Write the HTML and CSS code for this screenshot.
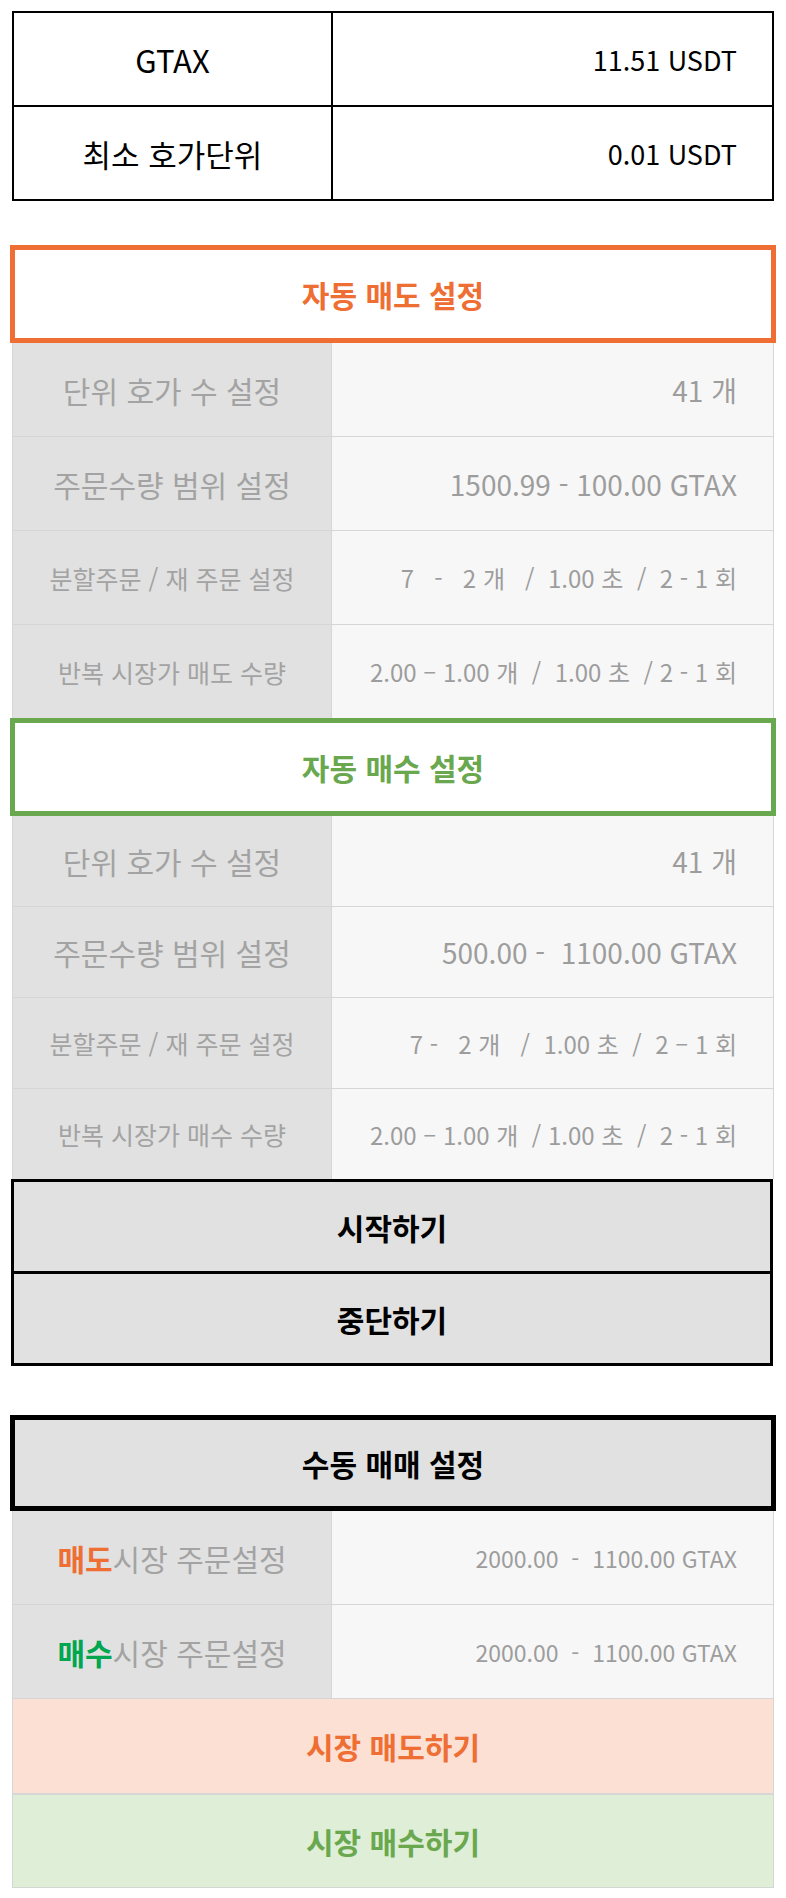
FILE: index.html
```html
<!DOCTYPE html>
<html lang="ko">

<head>
    <meta charset="UTF-8">
    <meta name="viewport" content="width=device-width, initial-scale=1.0">
    <title>GTAX 자동 매매</title>
    <link rel="stylesheet" href="styles.css">
</head>

<body>
    <div class="page">
        <div class="info">
            <div class="info-row">
                <div class="info-name">GTAX</div>
                <div class="info-value">11.51 USDT</div>
            </div>
            <div class="info-row">
                <div class="info-name">최소 호가단위</div>
                <div class="info-value">0.01 USDT</div>
            </div>
        </div>

        <!-- 자동 매도 -->
        <div class="section-title sell">자동 매도 설정</div>
        <div class="settings">
            <div class="setting">
                <div class="setting-name">단위 호가 수 설정</div>
                <div class="setting-value">41 개</div>
            </div>
            <div class="setting">
                <div class="setting-name">주문수량 범위 설정</div>
                <div class="setting-value">1500.99 - 100.00 GTAX</div>
            </div>
            <div class="setting small">
                <div class="setting-name">분할주문 / 재 주문 설정</div>
                <div class="setting-value">7 &nbsp; - &nbsp; 2 개 &nbsp; / &nbsp;1.00 초 &nbsp;/ &nbsp;2 - 1 회</div>
            </div>
            <div class="setting small">
                <div class="setting-name">반복 시장가 매도 수량</div>
                <div class="setting-value">2.00 – 1.00 개 &nbsp;/ &nbsp;1.00 초 &nbsp;/ 2 - 1 회</div>
            </div>
        </div>

        <!-- 자동 매수 -->
        <div class="section-title buy">자동 매수 설정</div>
        <div class="settings tight">
            <div class="setting">
                <div class="setting-name">단위 호가 수 설정</div>
                <div class="setting-value">41 개</div>
            </div>
            <div class="setting">
                <div class="setting-name">주문수량 범위 설정</div>
                <div class="setting-value">500.00 - &nbsp;1100.00 GTAX</div>
            </div>
            <div class="setting small">
                <div class="setting-name">분할주문 / 재 주문 설정</div>
                <div class="setting-value">7 - &nbsp; 2 개 &nbsp; / &nbsp;1.00 초 &nbsp;/ &nbsp;2 – 1 회</div>
            </div>
            <div class="setting small">
                <div class="setting-name">반복 시장가 매수 수량</div>
                <div class="setting-value">2.00 – 1.00 개 &nbsp;/ 1.00 초 &nbsp;/ &nbsp;2 - 1 회</div>
            </div>
        </div>

        <div class="controls">
            <div class="control">시작하기</div>
            <div class="control">중단하기</div>
        </div>

        <!-- 수동 매매 -->
        <div class="section-title manual">수동 매매 설정</div>
        <div class="settings">
            <div class="setting small-value">
                <div class="setting-name"><span class="sell-word">매도</span>시장 주문설정</div>
                <div class="setting-value">2000.00 &nbsp;- &nbsp;1100.00 GTAX</div>
            </div>
            <div class="setting small-value">
                <div class="setting-name"><span class="buy-word">매수</span>시장 주문설정</div>
                <div class="setting-value">2000.00 &nbsp;- &nbsp;1100.00 GTAX</div>
            </div>
        </div>
        <div class="market-list">
            <div class="market sell">시장 매도하기</div>
            <div class="market buy">시장 매수하기</div>
        </div>
    </div>
</body>

</html>
```

FILE: styles.css
```css
body {
    margin: 0;
    font-family: "Noto Sans CJK KR", "Noto Sans", sans-serif;
    background-color: #fff;
    color: #000;
}

.page {
    width: 762px;
    margin: 11px auto 0;
}

/* 상단 정보 테이블 */
.info {
    border: 2px solid #000;
    margin-bottom: 44px;
}

.info-row {
    display: flex;
    height: 92px;
}

.info-row + .info-row {
    border-top: 2px solid #000;
}

.info-name,
.info-value {
    display: flex;
    align-items: center;
}

.info-name {
    width: 317px;
    border-right: 2px solid #000;
    justify-content: center;
    font-size: 31px;
}

.info-value {
    flex: 1;
    justify-content: flex-end;
    padding-right: 35px;
    font-size: 27px;
}

/* 섹션 제목 */
.section-title {
    margin: 0 -2px;
    height: 88px;
    border: 5px solid #000;
    background-color: #fff;
    display: flex;
    align-items: center;
    justify-content: center;
    font-size: 30px;
    font-weight: 700;
}

.section-title.sell {
    border-color: #ee6e33;
    color: #ee6e33;
}

.section-title.buy {
    border-color: #6aa84f;
    color: #6aa84f;
}

.section-title.manual {
    height: 86px;
    background-color: #e1e1e1;
    color: #000;
}

/* 설정 행 */
.settings {
    border-left: 1px solid #d6d6d6;
    border-right: 1px solid #d6d6d6;
}

.setting {
    display: flex;
    height: 93px;
}

.settings.tight .setting {
    height: 90px;
}

.setting + .setting {
    border-top: 1px solid #d6d6d6;
}

.setting-name,
.setting-value {
    display: flex;
    align-items: center;
    white-space: nowrap;
}

.setting-name {
    width: 318px;
    background-color: #e1e1e1;
    border-right: 1px solid #d6d6d6;
    justify-content: center;
    color: #a3a3a3;
    font-size: 30px;
}

.setting-value {
    flex: 1;
    background-color: #f7f7f7;
    justify-content: flex-end;
    padding-right: 36px;
    color: #9d9d9d;
    font-size: 28px;
}

.setting.small .setting-name {
    font-size: 25px;
}

.setting.small .setting-value {
    font-size: 24px;
}

.setting.small-value .setting-value {
    font-size: 23px;
}

.sell-word {
    color: #ee6e33;
    font-weight: 700;
}

.buy-word {
    color: #00a650;
    font-weight: 700;
}

/* 시작 / 중단 */
.controls {
    margin: 0 1px 49px -1px;
    border: 3px solid #000;
}

.control {
    height: 89px;
    background-color: #e1e1e1;
    display: flex;
    align-items: center;
    justify-content: center;
    font-size: 30px;
    font-weight: 700;
}

.control + .control {
    border-top: 3px solid #000;
}

/* 시장가 버튼 */
.market-list {
    border: 1px solid #d6d6d6;
}

.market {
    height: 94px;
    display: flex;
    align-items: center;
    justify-content: center;
    font-size: 30px;
    font-weight: 700;
}

.market + .market {
    height: 92px;
    border-top: 2px solid #d6d6d6;
}

.market.sell {
    background-color: #fce0d3;
    color: #ee6e33;
}

.market.buy {
    background-color: #dfeed6;
    color: #6aa84f;
}
```
